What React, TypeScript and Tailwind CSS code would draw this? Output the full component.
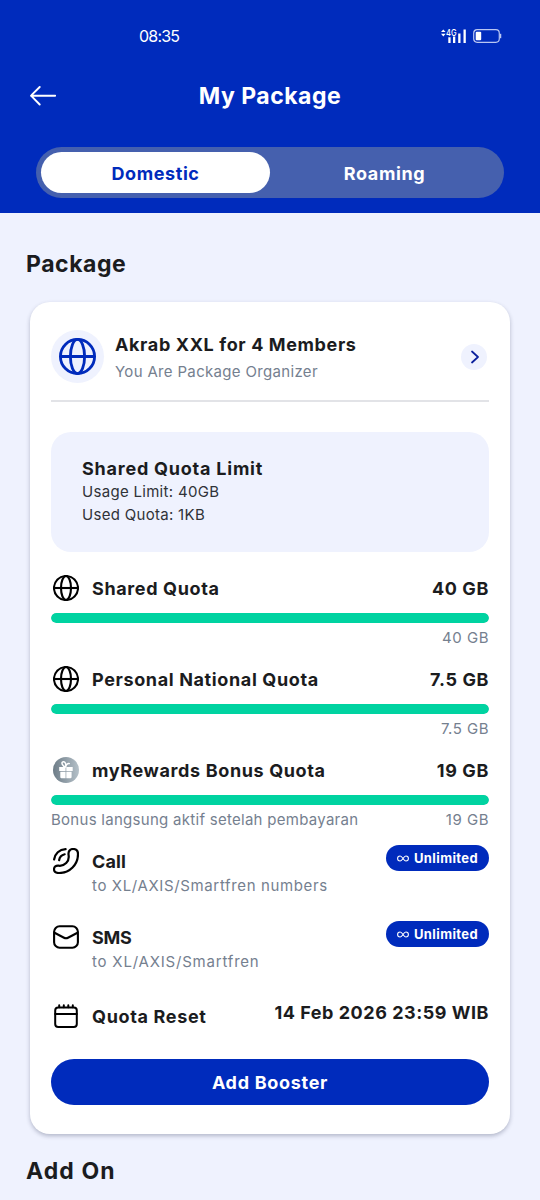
import React from 'react';

interface QuotaItem {
  name: string;
  amount: string;
  remaining: string;
  percent: number;
  icon: 'globe' | 'gift';
  note?: string;
}

interface UnlimitedItem {
  name: string;
  target: string;
  icon: React.ReactNode;
  nameClass: string;
  targetClass: string;
}

const quotas: QuotaItem[] = [
  { name: 'Shared Quota', amount: '40 GB', remaining: '40 GB', percent: 100, icon: 'globe' },
  { name: 'Personal National Quota', amount: '7.5 GB', remaining: '7.5 GB', percent: 100, icon: 'globe' },
  {
    name: 'myRewards Bonus Quota',
    amount: '19 GB',
    remaining: '19 GB',
    percent: 100,
    icon: 'gift',
    note: 'Bonus langsung aktif setelah pembayaran',
  },
];

function GlobeIcon({ className }: { className?: string }) {
  return (
    <svg viewBox="0 0 26 26" fill="none" stroke="currentColor" className={className}>
      <circle cx="13" cy="13" r="12" />
      <ellipse cx="13" cy="13" rx="5" ry="12" />
      <path d="M1 13h24" />
    </svg>
  );
}

function GiftIcon() {
  return (
    <svg viewBox="0 0 26 26" fill="none" className="size-[26px]">
      <defs>
        <linearGradient id="gift-bg" x1="0" y1="0" x2="1" y2="0">
          <stop offset="0" stopColor="#6d7c87" />
          <stop offset="1" stopColor="#b5c1c9" />
        </linearGradient>
      </defs>
      <circle cx="13" cy="13" r="13" fill="url(#gift-bg)" />
      <path d="M6.2 10h6.4v4H6.2zM13.3 10h6.4v4h-6.4zM7.3 14.7h5.3v6.6H8.5a1.2 1.2 0 0 1-1.2-1.2zM13.3 14.7h5.3v5.4a1.2 1.2 0 0 1-1.2 1.2h-4.1z" fill="#fff" />
      <path d="M12.7 10C9.2 9.4 7.8 4.9 10.2 4.7c2.2-.2 3 2.6 2.5 5.3zM12.7 10c.3-2.4 2-4 3.6-3.4" stroke="#fff" strokeWidth="1.5" strokeLinecap="round" />
    </svg>
  );
}

function CallIcon() {
  return (
    <svg viewBox="0 0 26 26" fill="none" stroke="currentColor" strokeWidth="2.2" strokeLinecap="round" className="size-[26px]">
      <path d="M20 1C23.2 1 25 2.8 25 6C25 16.6 16.8 25 6 25C2.8 25 1 23.7 1 21.2C1 18.9 2.9 17.4 5.6 17.7C8.6 18.1 11 17.2 13.2 15C15.4 12.8 16.1 10.4 15.6 7.2C15 3.6 16.8 1 20 1Z" />
      <path d="M1.1 11.5C1.9 5.8 6.3 1.5 12.6 1.1" />
      <path d="M6.1 12.2c.5-3.1 2.6-5.2 5.6-5.9" />
    </svg>
  );
}

function MailIcon() {
  return (
    <svg viewBox="0 0 26 24" fill="none" stroke="currentColor" strokeWidth="2.1" strokeLinejoin="round" className="h-6 w-[26px]">
      <rect x="1.1" y="1.3" width="23.8" height="21.4" rx="5.5" />
      <path d="M1.5 7.8l9.5 4.9a4.4 4.4 0 0 0 4 0l9.5-4.9" />
    </svg>
  );
}

function CalendarIcon() {
  return (
    <svg viewBox="0 0 26 24" fill="none" stroke="currentColor" strokeWidth="2" strokeLinecap="round" className="h-6 w-[26px]">
      <rect x="2.2" y="3.5" width="21.6" height="19.5" rx="3" />
      <path d="M2.2 10h21.6M6.2 1.2v2M10.8 1.2v2M15.3 1.2v2M19.8 1.2v2" />
    </svg>
  );
}

function InfinityIcon() {
  return (
    <svg viewBox="0 0 12 7" fill="none" stroke="currentColor" strokeWidth="1.1" className="h-[7px] w-3">
      <path d="M6 3.5C4.9 1.9 4.2 1 3.1 1a2.5 2.5 0 0 0 0 5C4.2 6 4.9 5.1 6 3.5S7.8 1 8.9 1a2.5 2.5 0 0 1 0 5C7.8 6 7.1 5.1 6 3.5Z" />
    </svg>
  );
}

const unlimited: UnlimitedItem[] = [
  {
    name: 'Call',
    target: 'to XL/AXIS/Smartfren numbers',
    icon: <CallIcon />,
    nameClass: 'tracking-[0.1px]',
    targetClass: 'tracking-[0.63px]',
  },
  {
    name: 'SMS',
    target: 'to XL/AXIS/Smartfren',
    icon: <MailIcon />,
    nameClass: 'tracking-[-0.3px]',
    targetClass: 'tracking-[0.8px]',
  },
];

function StatusBar() {
  return (
    <div className="flex h-[72px] items-center justify-between pr-[38px] pl-[139px] text-white">
      <span className="text-base tracking-[-0.8px]">08:35</span>
      <div className="flex items-center gap-[6px]">
        <svg viewBox="0 0 26 16" className="h-4 w-[26px]" fill="currentColor">
          <path d="M0 4l2.3-2.6L4.6 4zM0 5.8h4.6L2.3 8.4z" />
          <text x="5.1" y="7.6" fontSize="9.5" fontWeight="500" fontFamily="Inter, sans-serif" textLength="10.5" lengthAdjust="spacingAndGlyphs">4G</text>
          <path d="M7.3 9.3h2.3V15H7.3zM12 8.5h2.3V15H12zM17.2 5.5h2.3V15h-2.3zM22.5 1.5h2.3V15h-2.3z" />
        </svg>
        <svg viewBox="0 0 29 14" className="h-[14px] w-[29px]" fill="none">
          <rect x=".7" y=".7" width="25.6" height="12.6" rx="3.5" stroke="#b9c6f2" strokeWidth="1.2" />
          <rect x="2.7" y="2.8" width="5.5" height="8.4" rx="1" fill="#fff" />
          <path d="M27.6 4.8v4.4" stroke="#b9c6f2" strokeWidth="1.3" />
        </svg>
      </div>
    </div>
  );
}

function QuotaRow({ item }: { item: QuotaItem }) {
  return (
    <div className="h-[91px]">
      <div className="flex h-8 items-center">
        <span className="mr-[13px] ml-[2px] text-black">
          {item.icon === 'globe' ? <GlobeIcon className="size-[26px] stroke-[2.1px]" /> : <GiftIcon />}
        </span>
        <span className="pt-px text-lg font-bold tracking-[0.63px]">{item.name}</span>
        <span className="ml-auto pt-px text-lg font-bold tracking-[0.6px]">{item.amount}</span>
      </div>
      <div className="mt-[9px] h-[10px] overflow-hidden rounded-full bg-gray-200">
        <div className="h-full rounded-full bg-[#00d3a1]" style={{ width: `${item.percent}%` }} />
      </div>
      <div className="mt-[5px] flex h-5 items-center text-[15px] text-[#75808f]">
        {item.note && <span className="tracking-[0.28px]">{item.note}</span>}
        <span className="ml-auto tracking-[0.5px]">{item.remaining}</span>
      </div>
    </div>
  );
}

function UnlimitedRow({ item }: { item: UnlimitedItem }) {
  return (
    <div className="flex h-[76px] items-start">
      <span className="mr-[13px] ml-[2px] flex h-8 items-center text-black">{item.icon}</span>
      <div className="flex flex-col pt-px">
        <span className={`text-lg leading-[31px] font-bold ${item.nameClass}`}>{item.name}</span>
        <span className={`text-[15px] leading-[18px] text-[#75808f] ${item.targetClass}`}>{item.target}</span>
      </div>
      <div className="ml-auto flex h-[26px] w-[103px] items-center justify-center gap-[5px] rounded-full bg-[#002bbc] text-[13px] font-bold text-white">
        <InfinityIcon />
        <span className="pt-px tracking-[0.4px]">Unlimited</span>
      </div>
    </div>
  );
}

export default function App() {
  return (
    <div className="h-[1200px] w-[540px] overflow-hidden bg-[#eff2fe] font-['Inter',sans-serif] whitespace-nowrap text-[#1b1c1e]">
      {/* Header */}
      <header className="h-[213px] bg-[#002bbc]">
        <StatusBar />
        <div className="flex h-12 items-center pl-[30px] text-white">
          <svg viewBox="0 0 26 20" fill="none" stroke="currentColor" strokeWidth="1.9" strokeLinecap="round" strokeLinejoin="round" className="h-5 w-[26px]">
            <path d="M25.2 9.7H1M9.7 1L2 8.7Q1 9.7 2 10.7L9.7 18.5" />
          </svg>
          <h1 className="flex-1 pt-px pr-14 text-center text-[23px] font-bold tracking-[0.5px]">My Package</h1>
        </div>
        <div className="mx-9 mt-[27px] flex h-[51px] rounded-full bg-[#4560ae] p-[5px] text-lg font-bold">
          <button className="w-[229px] rounded-full bg-white pt-[2px] tracking-[0.6px] text-[#002bbc]">Domestic</button>
          <button className="flex-1 pt-[2px] tracking-[0.6px] text-white">Roaming</button>
        </div>
      </header>

      <h2 className="mt-[35px] ml-[26px] text-[23px] leading-8 font-bold tracking-[0.55px]">Package</h2>

      {/* Package card */}
      <section className="mx-[30px] mt-[22px] h-[832px] rounded-[20px] bg-white px-[21px] pt-7 shadow-[0_2px_4px_rgba(40,45,80,0.3)]">
        <div className="flex h-[72px] items-start border-b-2 border-[#e2e3e7]">
          <div className="flex size-[53px] items-center justify-center rounded-full bg-[#eff2fe] text-[#002bbc]">
            <GlobeIcon className="size-[37px] stroke-2" />
          </div>
          <div className="ml-[11px] flex flex-col pt-px">
            <span className="text-lg leading-[27px] font-bold tracking-[0.62px]">Akrab XXL for 4 Members</span>
            <span className="text-[15px] leading-7 tracking-[0.33px] text-[#75808f]">You Are Package Organizer</span>
          </div>
          <div className="mt-[14px] mr-[2px] ml-auto flex size-[26px] items-center justify-center rounded-full bg-[#eff2fe]">
            <svg viewBox="0 0 8 14" fill="none" stroke="#0a1f9c" strokeWidth="1.7" strokeLinecap="round" strokeLinejoin="round" className="ml-[2px] h-[14px] w-2">
              <path d="M1 1.5L7 7l-6 5.500" />
            </svg>
          </div>
        </div>

        <div className="mt-[30px] h-[120px] rounded-[20px] bg-[#eff2fe] pt-[25px] pl-[31px]">
          <div className="text-lg leading-6 font-bold tracking-[0.77px]">Shared Quota Limit</div>
          <div className="text-[15px] leading-[22.5px] tracking-[0.3px] text-[#303338]">
            <div>Usage Limit: 40GB</div>
            <div>Used Quota: 1KB</div>
          </div>
        </div>

        <div className="mt-5">
          {quotas.map((item) => (
            <QuotaRow key={item.name} item={item} />
          ))}
        </div>
        {unlimited.map((item) => (
          <UnlimitedRow key={item.name} item={item} />
        ))}

        {/* Quota reset */}
        <div className="mt-[3px] flex h-8 items-center">
          <span className="mr-[13px] ml-[2px] text-black">
            <CalendarIcon />
          </span>
          <span className="pt-[2px] text-lg font-bold tracking-[0.65px]">Quota Reset</span>
          <span className="ml-auto pb-[6px] text-lg font-bold tracking-[0.53px]">14 Feb 2026 23:59 WIB</span>
        </div>

        <button className="mt-[27px] h-[46px] w-full rounded-full bg-[#002bbc] pt-[2px] text-lg font-bold tracking-[0.7px] text-white">
          Add Booster
        </button>
      </section>

      <h2 className="mt-[21px] ml-[26px] text-[23px] leading-8 font-bold tracking-[1.1px]">Add On</h2>
    </div>
  );
}
